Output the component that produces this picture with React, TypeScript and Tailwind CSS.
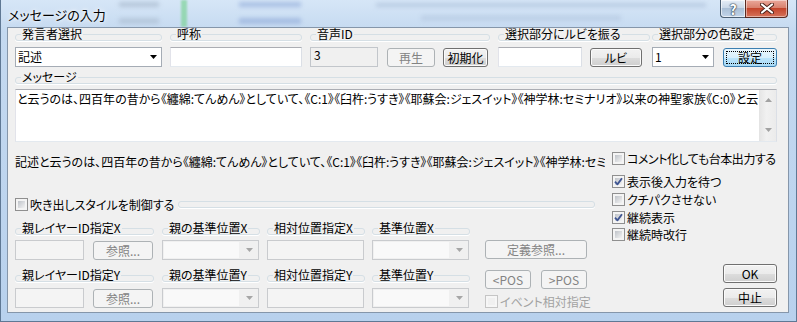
import React from "react";

const body =
  "と云うのは、四百年の昔から《纏綿:てんめん》としていて、《C:1》《臼杵:うすき》《耶蘇会:ジェスイット》《神学林:セミナリオ》以来の神聖家族《C:0》と云われている";

function Arrow({ color = "#000" }: { color?: string }) {
  return (
    <svg width="7" height="4" viewBox="0 0 7 4" className="shrink-0">
      <polygon points="0,0 7,0 3.5,4" fill={color} />
    </svg>
  );
}

function Head({ label, className = "" }: { label: string; className?: string }) {
  return (
    <fieldset className={`rounded-[3px] border border-[#d5dfe5] px-[5px] shadow-[0_1px_0_#fff] ${className}`}>
      <legend className="px-[1px] text-[12px] leading-[12px] whitespace-nowrap">{label}</legend>
    </fieldset>
  );
}

function Group({
  label,
  className = "",
  gap = "mt-[6px]",
  children,
}: {
  label: string;
  className?: string;
  gap?: string;
  children: React.ReactNode;
}) {
  return (
    <div className={`flex flex-col ${className}`}>
      <Head label={label} />
      <div className={`flex items-center ${gap}`}>{children}</div>
    </div>
  );
}

function Btn({
  children,
  className = "",
  disabled = false,
  focus = false,
}: {
  children: React.ReactNode;
  className?: string;
  disabled?: boolean;
  focus?: boolean;
}) {
  const look = disabled
    ? "border-[#adb2b5] bg-[#f4f4f4] text-[#838383]"
    : focus
      ? "border-[#3c7fb1] bg-[linear-gradient(#eaf6fd_0%,#d9f0fc_50%,#bee6fd_50%,#a7d9f5_100%)] p-[2px]"
      : "border-[#707070] bg-[linear-gradient(#f2f2f2_0%,#ebebeb_50%,#dddddd_50%,#cfcfcf_100%)] shadow-[inset_0_0_0_1px_#fbfbfb]";
  return (
    <div className={`flex h-[19px] shrink-0 items-center justify-center rounded-[3px] border text-[12px] leading-[13px] whitespace-nowrap ${look} ${className}`}>
      {focus ? (
        <span className="flex h-full w-full items-center justify-center border border-dotted border-black">{children}</span>
      ) : (
        children
      )}
    </div>
  );
}

function TextBox({ text = "", className = "", disabled = false, ro = false }: { text?: string; className?: string; disabled?: boolean; ro?: boolean }) {
  const look = disabled
    ? "border-[#c9cbce] bg-[#f4f4f4]"
    : ro
      ? "border-[#c2c6cb] bg-[#f0f0f0]"
      : "border-[#abadb3] border-b-[#e3e9ef] border-r-[#dbdfe6] border-l-[#e2e3ea] bg-white";
  return <div className={`h-[20px] shrink-0 border px-[3px] leading-[14px] ${look} ${className}`}>{text}</div>;
}

function Combo({ text = "", className = "", disabled = false }: { text?: string; className?: string; disabled?: boolean }) {
  if (disabled) {
    return (
      <div className={`flex h-[20px] shrink-0 border border-[#c9cbce] bg-[#f0f0f0] ${className}`}>
        <span className="m-[1px] flex-1 bg-[#f9f9f9]" />
        <span className="flex w-[18px] items-center justify-center">
          <Arrow color="#a6a6a6" />
        </span>
      </div>
    );
  }
  return (
    <div className={`flex h-[20px] shrink-0 items-center justify-between border border-[#a5acb5] bg-white pr-[4px] pl-[2px] ${className}`}>
      <span>{text}</span>
      <Arrow />
    </div>
  );
}

function Check({
  children,
  checked = false,
  disabled = false,
  className = "",
  label = "",
}: {
  children: React.ReactNode;
  checked?: boolean;
  disabled?: boolean;
  className?: string;
  label?: string;
}) {
  return (
    <div className={`flex h-[13px] items-center ${className}`}>
      <span className={`flex h-[13px] w-[13px] shrink-0 border p-[2px] ${disabled ? "border-[#c5c5c5] bg-[#f6f6f6]" : "border-[#8f8f8f] bg-[#f4f4f4]"}`}>
        <span
          className={`flex h-full w-full items-center justify-center ${
            disabled ? "bg-[#f0f0f0]" : "bg-[linear-gradient(135deg,#bfc3c9,#f3f3f3)]"
          }`}
        >
          {checked && (
            <svg width="9" height="9" viewBox="0 0 9 9" className="shrink-0">
              <path d="M1 4.6 L3.4 7.4 L8 1.2" fill="none" stroke="#3f5592" strokeWidth="1.8" strokeLinejoin="round" />
            </svg>
          )}
        </span>
      </span>
      <span className={`ml-[2px] leading-[14px] whitespace-nowrap ${disabled ? "text-[#a2a2a2]" : ""} ${label}`}>{children}</span>
    </div>
  );
}

function TitleBar() {
  return (
    <div className="relative flex h-[27px] shrink-0 items-start justify-between overflow-hidden">
      {/* blurred content seen through the glass */}
      <span className="absolute top-[2px] left-[118px] h-[5px] w-[40px] bg-[#a3b4c8] opacity-60 blur-[2px]" />
      <span className="absolute top-[18px] left-[118px] h-[6px] w-[40px] bg-[#a3b4c8] opacity-50 blur-[2px]" />
      <span className="absolute top-0 left-[180px] h-[27px] w-[6px] bg-[#7fd49a] opacity-70 blur-[1px]" />
      <span className="absolute top-[2px] left-[238px] h-[5px] w-[62px] bg-[#8ea8d8] opacity-60 blur-[2px]" />
      <span className="absolute top-[18px] left-[238px] h-[6px] w-[62px] bg-[#8ea8d8] opacity-60 blur-[2px]" />
      <span className="absolute top-[3px] left-[375px] h-[4px] w-[330px] bg-[#9fb3cf] opacity-50 blur-[2px]" />
      <span className="absolute top-[15px] left-[420px] h-[6px] w-[200px] bg-[#a9bcd7] opacity-40 blur-[2px]" />
      <span className="relative pt-[7px] pl-[7px] text-[13px] leading-[16px] [text-shadow:0_0_6px_#fff,0_0_3px_#fff]">メッセージの入力</span>
      <div className="relative mr-[8px] flex">
        <div className="flex h-[18px] w-[25px] items-center justify-center rounded-bl-[4px] border border-t-0 border-r-0 border-[#4b5f74] bg-[linear-gradient(#e6eef7_0%,#cad8e8_45%,#aabfd6_50%,#c2d5ea_100%)] shadow-[inset_0_0_0_1px_rgba(255,255,255,0.6)]">
          <span className="text-[14px] leading-[14px] font-bold text-white [text-shadow:0_0_1px_#2d3b4b,0_0_1px_#2d3b4b,0_0_2px_#2d3b4b]">?</span>
        </div>
        <div className="flex h-[18px] w-[43px] items-center justify-center rounded-br-[4px] border border-t-0 border-[#5a2a22] bg-[linear-gradient(#eaa89b_0%,#d9816e_45%,#c4452c_50%,#d5735b_100%)] shadow-[inset_0_0_0_1px_rgba(255,255,255,0.45)]">
          <svg width="14" height="11" viewBox="0 0 14 11">
            <path d="M2 1.5 L12 9.5 M12 1.5 L2 9.5" stroke="#4a2018" strokeWidth="4" strokeLinecap="round" />
            <path d="M2 1.5 L12 9.5 M12 1.5 L2 9.5" stroke="#ffffff" strokeWidth="2.2" strokeLinecap="round" />
          </svg>
        </div>
      </div>
    </div>
  );
}

export default function App() {
  return (
    <div className="flex h-[322px] w-[797px] flex-col overflow-hidden border-x border-b border-[#5f7894] bg-[linear-gradient(180deg,#d6e6f7_0%,#c4d9f0_10%,#b8d1ed_100%)] font-['Noto_Sans_CJK_JP',sans-serif] text-[12px] text-black [font-feature-settings:'palt']">
      <TitleBar />
      <div className="ml-[6px] flex h-[286px] w-[782px] shrink-0 flex-col overflow-hidden border border-[#8596aa] bg-[#f0f0f0] pl-[7px]">
        {/* row 1 */}
        <div className="flex">
          <Group label="発言者選択" className="w-[147px]">
            <Combo text="記述" className="w-[147px]" />
          </Group>
          <Group label="呼称" className="ml-[8px] w-[132px]">
            <TextBox className="w-[132px]" />
          </Group>
          <Group label="音声ID" className="ml-[8px] w-[180px]">
            <TextBox text="3" ro className="w-[68px]" />
            <Btn disabled className="ml-[9px] w-[48px]">再生</Btn>
            <Btn className="ml-[8px] w-[45px]">初期化</Btn>
          </Group>
          <Group label="選択部分にルビを振る" className="ml-[8px] w-[152px]">
            <TextBox className="w-[84px]" />
            <Btn className="ml-[8px] w-[52px]">ルビ</Btn>
          </Group>
          <Group label="選択部分の色設定" className="ml-[2px] w-[125px]">
            <Combo text="1" className="w-[62px]" />
            <Btn focus className="ml-[9px] w-[54px]">設定</Btn>
          </Group>
        </div>

        {/* message */}
        <Head label="メッセージ" className="mt-[4px] w-[762px]" />
        <div className="mt-[5px] flex h-[53px] w-[762px] shrink-0 border border-[#abadb3] border-b-[#e3e9ef] border-r-[#dbdfe6] border-l-[#e2e3ea] bg-white">
          <div className="flex-1 overflow-hidden pt-[2px] pl-[1px] leading-[14px] whitespace-nowrap">{body}</div>
          <div className="flex w-[17px] flex-col items-center justify-between border-l border-[#e4e4e4] bg-[linear-gradient(90deg,#e6e6e6,#f1f1f1_40%,#ebebeb)] pt-[8px] pb-[9px]">
            <svg width="7" height="4" viewBox="0 0 7 4">
              <polygon points="0,4 7,4 3.5,0" fill="#a2a2a2" />
            </svg>
            <Arrow color="#a2a2a2" />
          </div>
        </div>

        {/* lower area */}
        <div className="flex">
          <div className="flex w-[590px] flex-col">
            <div className="mt-[12px] h-[15px] overflow-hidden leading-[15px] whitespace-nowrap">記述{body}</div>
            <div className="mt-[29px] flex h-[13px] items-center">
              <Check>吹き出しスタイルを制御する</Check>
              <div className="mr-[10px] ml-[4px] h-[7px] flex-1 rounded-[3px] border border-[#d5dfe5] shadow-[0_1px_0_#fff]" />
            </div>
            <div className="mt-[11px] flex">
              <div className="flex flex-col">
                <div className="flex">
                  <Group label="親レイヤーID指定X" className="w-[139px]" gap="mt-[5px]">
                    <TextBox disabled className="w-[69px]" />
                    <Btn disabled className="ml-[9px] w-[60px]">参照...</Btn>
                  </Group>
                  <Group label="親の基準位置X" className="ml-[8px] w-[98px]" gap="mt-[5px]">
                    <Combo disabled className="w-[97px]" />
                  </Group>
                  <Group label="相対位置指定X" className="ml-[7px] w-[98px]" gap="mt-[5px]">
                    <TextBox disabled className="w-[97px]" />
                  </Group>
                  <Group label="基準位置X" className="ml-[7px] w-[98px]" gap="mt-[5px]">
                    <Combo disabled className="w-[97px]" />
                  </Group>
                </div>
                <div className="mt-[9px] flex">
                  <Group label="親レイヤーID指定Y" className="w-[139px]">
                    <TextBox disabled className="w-[69px]" />
                    <Btn disabled className="ml-[9px] w-[60px]">参照...</Btn>
                  </Group>
                  <Group label="親の基準位置Y" className="ml-[8px] w-[98px]">
                    <Combo disabled className="w-[97px]" />
                  </Group>
                  <Group label="相対位置指定Y" className="ml-[7px] w-[98px]">
                    <TextBox disabled className="w-[97px]" />
                  </Group>
                  <Group label="基準位置Y" className="ml-[7px] w-[98px]">
                    <Combo disabled className="w-[97px]" />
                  </Group>
                </div>
              </div>
              <div className="ml-[15px] flex w-[102px] flex-col">
                <Btn disabled className="mt-[18px] w-[102px]">定義参照...</Btn>
                <div className="mt-[11px] flex justify-between">
                  <Btn disabled className="w-[46px]">&lt;POS</Btn>
                  <Btn disabled className="w-[46px]">&gt;POS</Btn>
                </div>
                <Check disabled className="mt-[6px]">イベント相対指定</Check>
              </div>
            </div>
          </div>

          <div className="ml-[7px] flex w-[165px] flex-col">
            <Check className="mt-[10px]" label="tracking-[-0.45px]">コメント化しても台本出力する</Check>
            <Check checked className="mt-[10px]">表示後入力を待つ</Check>
            <Check className="mt-[5px]">クチパクさせない</Check>
            <Check checked className="mt-[5px]">継続表示</Check>
            <Check className="mt-[4px]">継続時改行</Check>
            <Btn className="mt-[23px] w-[54px] self-end">OK</Btn>
            <Btn className="mt-[5px] w-[54px] self-end">中止</Btn>
          </div>
        </div>
      </div>
    </div>
  );
}
